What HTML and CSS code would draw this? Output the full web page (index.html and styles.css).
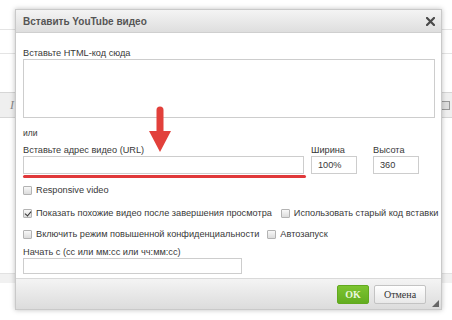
FILE: index.html
```html
<!DOCTYPE html>
<html lang="ru">
<head>
  <meta charset="UTF-8">
  <meta name="viewport" content="width=device-width, initial-scale=1.0">
  <title>Вставить YouTube видео</title>
  <link rel="stylesheet" href="styles.css">
</head>
<body>
  <div class="page">
    <div class="page-line"></div>
    <div class="page-line second"></div>
    <div class="page-toolbar">
      <span class="tb-italic">I</span>
      <span class="tb-icon"></span>
    </div>
    <div class="page-bottom"></div>
  </div>

  <div class="dialog">
    <div class="dialog-title">
      <span>Вставить YouTube видео</span>
      <svg class="close" width="9" height="9" viewBox="0 0 9 9">
        <path d="M1 1L8 8M8 1L1 8" stroke="#4a4a4a" stroke-width="2.2" stroke-linecap="square"/>
      </svg>
    </div>

    <div class="dialog-body">
      <div class="lbl first">Вставьте HTML-код сюда</div>
      <textarea class="code"></textarea>
      <div class="lbl or">или</div>

      <div class="url-row">
        <div class="field url">
          <div class="lbl">Вставьте адрес видео (URL)</div>
          <input class="input" type="text" value="">
        </div>
        <div class="field size">
          <div class="lbl">Ширина</div>
          <input class="input" type="text" value="100%">
        </div>
        <div class="field size">
          <div class="lbl">Высота</div>
          <input class="input" type="text" value="360">
        </div>
      </div>

      <div class="check-row r1">
        <span class="check"><span class="cb"></span>Responsive video</span>
      </div>
      <div class="check-row r2">
        <span class="check"><span class="cb checked"></span>Показать похожие видео после завершения просмотра</span>
        <span class="check"><span class="cb"></span>Использовать старый код вставки</span>
      </div>
      <div class="check-row r3">
        <span class="check"><span class="cb"></span>Включить режим повышенной конфиденциальности</span>
        <span class="check"><span class="cb"></span>Автозапуск</span>
      </div>

      <div class="lbl start">Начать с (сс или мм:сс или чч:мм:сс)</div>
      <input class="input start-input" type="text" value="">
    </div>

    <div class="dialog-footer">
      <button class="btn btn-ok">OK</button>
      <button class="btn btn-cancel">Отмена</button>
      <svg class="grip" width="7" height="7" viewBox="0 0 7 7">
        <path d="M7 0L7 7L0 7Z" fill="#666"/>
      </svg>
    </div>

    <svg class="arrow" width="24" height="46" viewBox="0 0 24 46">
      <path d="M8.5 4a3.5 3.5 0 0 1 7 0V25h7.5L12 46L1 25h7.5Z" fill="#e2403b"/>
    </svg>
  </div>
</body>
</html>
```

FILE: styles.css
```css
*{
  box-sizing: border-box;
}
body{
  margin: 0;
  width: 452px;
  height: 320px;
  overflow: hidden;
  background: #fff;
  font-family: "Liberation Sans", Arial, sans-serif;
  font-size: 9.2px;
  color: #383838;
}

/* page behind the dialog */
.page{
  position: relative;
  height: 320px;
  padding-top: 29px;
}
.page-line{
  height: 1px;
  background: #e4e4e4;
}
.page-line.second{
  margin-top: 23px;
}
.page-toolbar{
  display: flex;
  justify-content: space-between;
  align-items: center;
  margin-top: 38px;
  height: 26px;
  padding: 0 2px 0 10px;
  background: #efefef;
  border-top: 1px solid #d6d6d6;
  border-bottom: 1px solid #d6d6d6;
}
.tb-italic{
  font-family: "Liberation Serif", serif;
  font-style: italic;
  font-size: 12px;
  color: #888;
}
.tb-icon{
  width: 9px;
  height: 9px;
  border: 1px solid #999;
  background: #ddd;
}
.page-bottom{
  margin-top: 155px;
  height: 10px;
  background: #f1f1f1;
  border-top: 1px solid #e2e2e2;
}

/* dialog */
.dialog{
  position: absolute;
  left: 15px;
  top: 9px;
  width: 427px;
  height: 301px;
  display: flex;
  flex-direction: column;
  background: #fff;
  border: 1px solid #c9c9c9;
  box-shadow: 0 0 5px rgba(0, 0, 0, 0.25);
}
.dialog-title{
  display: flex;
  justify-content: space-between;
  align-items: center;
  height: 23px;
  padding: 0 6px 0 7px;
  background: linear-gradient(#f4f4f4, #dedede);
  border-bottom: 1px solid #cfcfcf;
  font-size: 10px;
  font-weight: bold;
  color: #555;
}
.dialog-body{
  flex: 1;
  padding: 0 6px 0 7px;
}
.lbl{
  line-height: 12px;
  white-space: nowrap;
}
.lbl.first{
  margin-top: 14px;
}
.code{
  display: block;
  width: 100%;
  height: 59px;
  margin: 0;
  border: 1px solid #cdcdcd;
  resize: none;
}
.lbl.or{
  margin-top: 9px;
  font-size: 8.5px;
}

.url-row{
  display: flex;
  gap: 7px;
  margin-top: 5px;
}
.field.url{
  position: relative;
  width: 281px;
}
.field.url::after{
  content: '';
  position: absolute;
  left: 0;
  right: -2px;
  bottom: -4px;
  height: 3px;
  border-radius: 2px;
  background: #e0383a;
}
.field.size{
  width: 46px;
  margin-right: 9px;
}
.input{
  display: block;
  width: 100%;
  height: 18px;
  margin: 0;
  padding: 0 6px;
  border: 1px solid #cdcdcd;
  font-family: "Liberation Sans", Arial, sans-serif;
  font-size: 9.2px;
  color: #383838;
  outline: none;
}

.check-row{
  display: flex;
  gap: 9px;
  line-height: 14px;
  white-space: nowrap;
}
.check-row.r1{
  margin-top: 9px;
}
.check-row.r2{
  margin-top: 9px;
}
.check-row.r3{
  margin-top: 7px;
  gap: 8px;
}
.check{
  display: flex;
  align-items: center;
}
.cb{
  position: relative;
  width: 9px;
  height: 9px;
  margin-right: 4px;
  border: 1px solid #b3b3b3;
  border-radius: 1px;
  background: linear-gradient(#f8f8f8, #dcdcdc);
}
.cb.checked::after{
  content: '';
  position: absolute;
  left: 2px;
  top: 0;
  width: 3px;
  height: 5px;
  border-right: 1.5px solid #333;
  border-bottom: 1.5px solid #333;
  transform: rotate(40deg);
}

.lbl.start{
  margin-top: 5px;
}
.start-input{
  width: 219px;
  height: 16px;
}

.dialog-footer{
  position: relative;
  display: flex;
  align-items: center;
  justify-content: flex-end;
  gap: 5px;
  height: 31px;
  padding-right: 15px;
  background: linear-gradient(#f4f4f4, #dcdcdc);
  border-top: 1px solid #d9d9d9;
}
.btn{
  height: 19px;
  margin: 0;
  padding: 0;
  border-radius: 2px;
  font-family: "Liberation Serif", "Times New Roman", serif;
  font-size: 10px;
  cursor: pointer;
}
.btn-ok{
  width: 32px;
  border: 1px solid #62a91f;
  background: linear-gradient(#7cc430, #63ad20);
  color: #eaf7dc;
  font-weight: bold;
}
.btn-cancel{
  width: 52px;
  border: 1px solid #c3c3c3;
  background: linear-gradient(#ffffff, #e8e8e8);
  color: #333;
}
.grip{
  position: absolute;
  right: 2px;
  bottom: 2px;
}

/* annotation arrow drawn over the form */
.arrow{
  position: absolute;
  left: 132px;
  top: 96px;
}
```
